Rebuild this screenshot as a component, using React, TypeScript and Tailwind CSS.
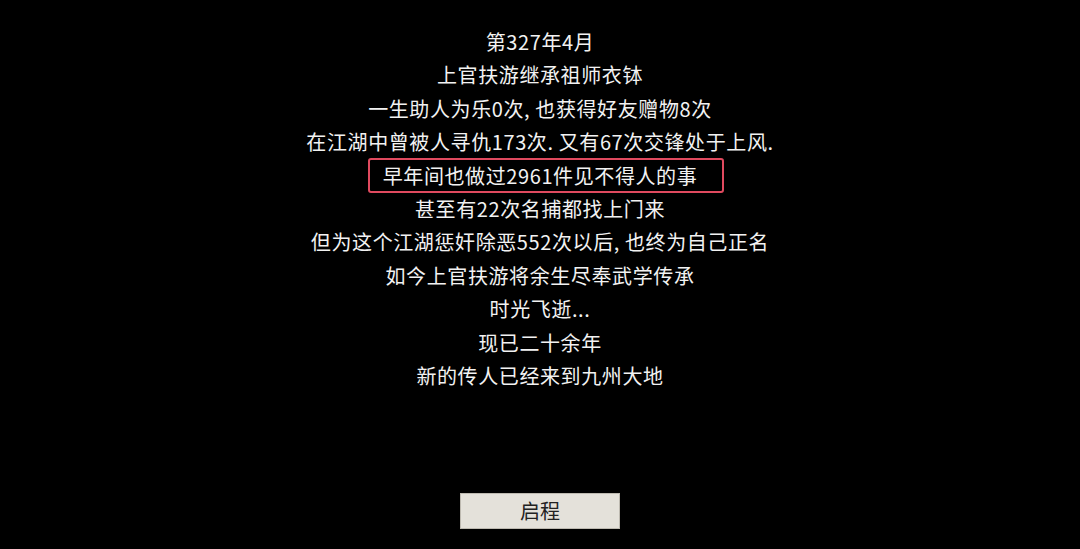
const lines = [
  '第327年4月',
  '上官扶游继承祖师衣钵',
  '一生助人为乐0次, 也获得好友赠物8次',
  '在江湖中曾被人寻仇173次. 又有67次交锋处于上风.',
  '早年间也做过2961件见不得人的事',
  '甚至有22次名捕都找上门来',
  '但为这个江湖惩奸除恶552次以后, 也终为自己正名',
  '如今上官扶游将余生尽奉武学传承',
  '时光飞逝...',
  '现已二十余年',
  '新的传人已经来到九州大地',
];

const HIGHLIGHT = 4;

export default function App() {
  return (
    <main
      className="flex min-h-screen flex-col items-center bg-black text-[#f2f2f2]"
      style={{ fontFamily: '"Noto Sans CJK SC", "Noto Sans", sans-serif' }}
    >
      <div className="flex flex-col items-center pt-[25px] text-[20px] leading-[33.4px] tracking-[0.6px]">
        {lines.map((line, i) => (
          <p key={i} className="relative whitespace-pre">
            {i === HIGHLIGHT && (
              <span className="pointer-events-none absolute -top-[0.5px] -bottom-[0.5px] -left-[15px] -right-[27px] rounded-[3px] border-2 border-[#e04a5f]" />
            )}
            {line}
          </p>
        ))}
      </div>

      <button className="mt-auto mb-[20px] h-[36px] w-[160px] border border-[#bdb9b0] bg-[#e4e1da] text-[20px] text-[#222]">
        启程
      </button>
    </main>
  );
}
